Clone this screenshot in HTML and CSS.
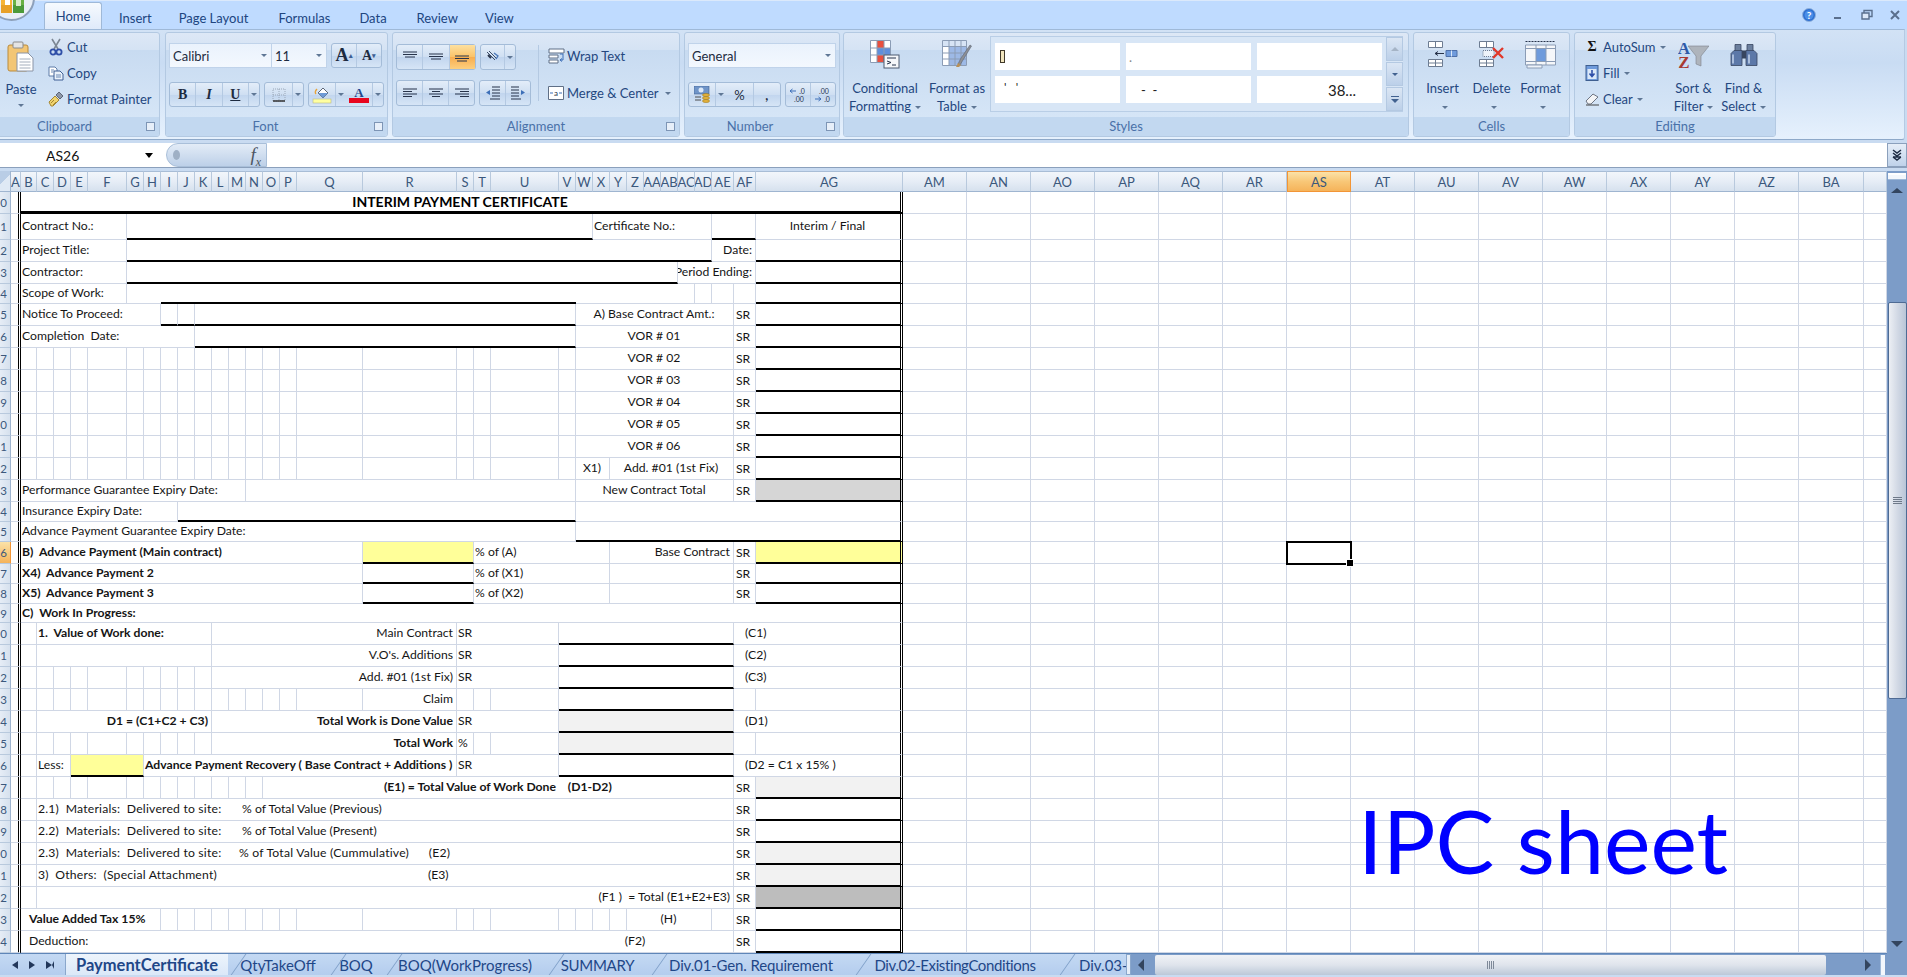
FILE: index.html
```html
<!DOCTYPE html>
<html lang="en">
<head>
    <meta charset="UTF-8">
    <title>IPC sheet - Microsoft Excel</title>
    <link rel="stylesheet" href="styles.css">
</head>
<body>
<div class="app">
    <div class="office-btn">
        <svg width="26" height="16" viewBox="0 0 26 16"><rect x="1" y="0" width="11" height="8" fill="#f5b437"/><rect x="13" y="0" width="11" height="8" fill="#69b043"/><rect x="1" y="8" width="11" height="8" fill="#e8a026"/><rect x="13" y="8" width="11" height="8" fill="#4c9a3a"/><rect x="5" y="3" width="5" height="5" fill="#fff"/><rect x="16" y="3" width="5" height="6" fill="#d9eccb"/></svg>
    </div>
    <div class="tabbar">
        <span class="rtab active">Home</span>
        <span class="rtab t-insert">Insert</span>
        <span class="rtab t-page">Page Layout</span>
        <span class="rtab t-form">Formulas</span>
        <span class="rtab t-data">Data</span>
        <span class="rtab t-rev">Review</span>
        <span class="rtab t-view">View</span>
        <div class="winctl">
            <svg width="14" height="14" viewBox="0 0 14 14"><circle cx="7" cy="7" r="6.5" fill="#2e6fd0" stroke="#8fb0dc"/><circle cx="7" cy="7" r="4.5" fill="#4a8ee8"/><text x="7" y="10.5" font-size="10" font-weight="700" text-anchor="middle" fill="#fff">?</text></svg>
            <svg width="12" height="12" viewBox="0 0 12 12"><path d="M2 9h7" stroke="#5a6f8d" stroke-width="2"/></svg>
            <svg width="12" height="12" viewBox="0 0 12 12"><path d="M3 1.5h8v6H3z" fill="none" stroke="#5a6f8d" stroke-width="1.4"/><path d="M1 4h7v6H1z" fill="#dbe8f8" stroke="#5a6f8d" stroke-width="1.4"/></svg>
            <svg width="12" height="12" viewBox="0 0 12 12"><path d="M2 2l8 8M10 2l-8 8" stroke="#5a6f8d" stroke-width="2"/></svg>
        </div>
    </div>

    <div class="ribbon">
        <div class="group g-clip">
            <div class="group-body">
                <div class="paste">
                    <svg width="28" height="31" viewBox="0 0 28 31"><rect x="1" y="4" width="20" height="26" rx="2" fill="#f3c675" stroke="#b98a3c"/><rect x="6" y="1" width="10" height="6" rx="1" fill="#e4e4e4" stroke="#8b8b8b"/><path d="M10 12h11l5 5v13H10z" fill="#fff" stroke="#8a94a6"/><path d="M12.500 18h11M12.500 21h11M12.500 24h11M12.500 27h11" stroke="#a4aebc"/></svg>
                    <span class="paste-label">Paste</span>
                    <i class="dd"></i>
                </div>
                <div class="clip-list">
                    <div class="clip-item">
                        <svg width="14" height="18" viewBox="0 0 14 18"><path d="M3 1l6 10M11 1L5 11" stroke="#7d8794" stroke-width="1.6"/><circle cx="4" cy="14" r="2.600" fill="none" stroke="#2f4fa8" stroke-width="1.800"/><circle cx="10" cy="14" r="2.600" fill="none" stroke="#2f4fa8" stroke-width="1.800"/></svg>
                        <span>Cut</span>
                    </div>
                    <div class="clip-item">
                        <svg width="16" height="15" viewBox="0 0 16 15"><path d="M1 1h6l2 2v7H1z" fill="#fff" stroke="#5f7da8"/><path d="M6 5h6l3 3v6H6z" fill="#eaf2fb" stroke="#3e5f94"/><path d="M8 9h5M8 11h5M3 4h3M3 6h2" stroke="#6d8ab5"/></svg>
                        <span>Copy</span>
                    </div>
                    <div class="clip-item">
                        <svg width="16" height="16" viewBox="0 0 16 16"><path d="M1 11l6-6 4 4-6 6H3z" fill="#f0d470" stroke="#a58732"/><path d="M8 4l3-3 4 4-3 3z" fill="#8d97a8" stroke="#5d6677"/><path d="M3 12l3-3M5 14l3-3" stroke="#a58732"/></svg>
                        <span>Format Painter</span>
                    </div>
                </div>
            </div>
            <div class="group-cap cap-clip">Clipboard<i class="launcher"></i></div>
        </div>

        <div class="group g-font">
            <div class="group-body stack">
                <div class="tool-row">
                    <div class="combo font-name"><span>Calibri</span><i class="dd"></i></div>
                    <div class="combo font-size"><span>11</span><i class="dd"></i></div>
                    <div class="strip grow-shrink">
                        <span class="serif big-a">A<sup>&#9652;</sup></span>
                        <span class="serif small-a">A<sup>&#9662;</sup></span>
                    </div>
                </div>
                <div class="tool-row">
                    <div class="strip biu">
                        <span class="serif fb">B</span>
                        <span class="serif fi">I</span>
                        <span class="serif fu">U</span>
                        <span class="drop"><i class="dd"></i></span>
                    </div>
                    <div class="strip borders">
                        <span><svg width="14" height="14" viewBox="0 0 14 14"><path d="M1 1h12v12H1z" fill="none" stroke="#9aa7b8" stroke-dasharray="1 1"/><path d="M1 7h12M7 1v12" stroke="#9aa7b8" stroke-dasharray="1 1"/><path d="M1 13h12" stroke="#333" stroke-width="1.500"/></svg></span>
                        <span class="drop"><i class="dd"></i></span>
                    </div>
                    <div class="strip colors">
                        <span><svg width="20" height="18" viewBox="0 0 20 18"><path d="M6 7l5-5 5 5-5 5z" fill="#fff" stroke="#5d6677"/><path d="M6 7h10l-5 5z" fill="#6f9bd6"/><path d="M5 3c-2 2-2 4-1 5" fill="none" stroke="#e8a43a" stroke-width="1.500"/><rect x="1" y="13" width="18" height="4" fill="#ffffa0" stroke="#b9b98a" stroke-width=".6"/></svg></span>
                        <span class="drop"><i class="dd"></i></span>
                        <span><svg width="20" height="18" viewBox="0 0 20 18"><text x="10" y="11" font-size="13" font-weight="700" text-anchor="middle" fill="#23468b" font-family="Liberation Serif, serif">A</text><rect x="0" y="12" width="20" height="5" fill="#e8061e"/></svg></span>
                        <span class="drop"><i class="dd"></i></span>
                    </div>
                </div>
            </div>
            <div class="group-cap cap-font">Font<i class="launcher"></i></div>
        </div>

        <div class="group g-align">
            <div class="group-body align-body">
                <div class="stack align-tools">
                    <div class="tool-row">
                        <div class="strip three">
                            <span><svg width="14" height="12" viewBox="0 0 14 12"><path d="M0 1h14M0 3.500h14M2 6h10" stroke="#27334a"/></svg></span>
                            <span><svg width="14" height="12" viewBox="0 0 14 12"><path d="M0 3h14M0 5.500h14M2 8h10" stroke="#27334a"/></svg></span>
                            <span class="on"><svg width="14" height="12" viewBox="0 0 14 12"><path d="M0 5h14M0 7.500h14M2 10h10" stroke="#27334a"/></svg></span>
                        </div>
                        <div class="strip orient">
                            <span><svg width="16" height="14" viewBox="0 0 16 14"><path d="M2 2l8 8M4 1l8 8" stroke="#3c4c66"/><path d="M9 3l4 3-2 3" fill="none" stroke="#4c78b8" stroke-width="1.300"/><path d="M3 5l3 3" stroke="#27334a" stroke-width="2"/></svg></span>
                            <span class="drop"><i class="dd"></i></span>
                        </div>
                    </div>
                    <div class="tool-row">
                        <div class="strip three">
                            <span><svg width="14" height="11" viewBox="0 0 14 11"><path d="M0 1h14M0 3.500h9M0 6h14M0 8.500h9" stroke="#27334a"/></svg></span>
                            <span><svg width="14" height="11" viewBox="0 0 14 11"><path d="M0 1h14M3 3.500h8M0 6h14M3 8.500h8" stroke="#27334a"/></svg></span>
                            <span><svg width="14" height="11" viewBox="0 0 14 11"><path d="M0 1h14M5 3.500h9M0 6h14M5 8.500h9" stroke="#27334a"/></svg></span>
                        </div>
                        <div class="strip indent">
                            <span><svg width="16" height="14" viewBox="0 0 16 14"><path d="M7 1h8M7 4h8M7 7h8M7 10h8M5 13h10" stroke="#27334a"/><path d="M5 4L1 6.500 5 9z" fill="#3d6fb8"/></svg></span>
                            <span><svg width="16" height="14" viewBox="0 0 16 14"><path d="M1 1h8M1 4h8M1 7h8M1 10h8M1 13h10" stroke="#27334a"/><path d="M11 4l4 2.500L11 9z" fill="#3d6fb8"/></svg></span>
                        </div>
                    </div>
                </div>
                <div class="align-sep"></div>
                <div class="wrap-merge">
                    <div class="clip-item">
                        <svg width="16" height="16" viewBox="0 0 16 16"><path d="M1 1h15v4H1zM1 7h9v3H1zM1 12h9v3H1z" fill="#fff" stroke="#5f6f86"/><path d="M12 6h3v6h-3M12 12l2-1.500M12 12l2 1.500" fill="none" stroke="#3d6fb8"/></svg>
                        <span>Wrap Text</span>
                    </div>
                    <div class="clip-item">
                        <svg width="16" height="16" viewBox="0 0 16 16"><path d="M.5 1.500h15v13H.5z" fill="#fff" stroke="#5f6f86"/><text x="8" y="11" font-size="8" text-anchor="middle" fill="#27334a">a</text><path d="M2 8h3M14 8h-3" stroke="#3d6fb8"/></svg>
                        <span>Merge &amp; Center</span><i class="dd"></i>
                    </div>
                </div>
            </div>
            <div class="group-cap">Alignment<i class="launcher"></i></div>
        </div>

        <div class="group g-number">
            <div class="group-body stack">
                <div class="combo num-format"><span>General</span><i class="dd"></i></div>
                <div class="tool-row">
                    <div class="strip currency">
                        <span><svg width="17" height="17" viewBox="0 0 17 17"><rect x="0" y="0" width="15" height="8" fill="#6f94c8" stroke="#3f5f90" stroke-width=".6"/><circle cx="7" cy="4" r="2.500" fill="#dbe8f8"/><ellipse cx="12" cy="9" rx="3.500" ry="1.500" fill="#e3b23c" stroke="#a07a20" stroke-width=".6"/><ellipse cx="12" cy="12" rx="3.500" ry="1.500" fill="#e3b23c" stroke="#a07a20" stroke-width=".6"/><ellipse cx="12" cy="15" rx="3.500" ry="1.500" fill="#e3b23c" stroke="#a07a20" stroke-width=".6"/><path d="M1 11h6M1 14h6" stroke="#4d4d4d"/></svg></span>
                        <span class="drop"><i class="dd"></i></span>
                        <span class="glyph">%</span>
                        <span class="glyph comma">,</span>
                    </div>
                    <div class="strip decimals">
                        <span><svg width="18" height="16" viewBox="0 0 18 16"><path d="M7 4H1M1 4l2.500-2M1 4l2.500 2" fill="none" stroke="#3d6fb8"/><text x="13" y="7" font-size="7" text-anchor="middle" fill="#27334a">.0</text><text x="10" y="15" font-size="7" text-anchor="middle" fill="#27334a">.00</text></svg></span>
                        <span><svg width="18" height="16" viewBox="0 0 18 16"><text x="10" y="7" font-size="7" text-anchor="middle" fill="#27334a">.00</text><path d="M1 12h6M7 12l-2.500-2M7 12l-2.500 2" fill="none" stroke="#3d6fb8"/><text x="13" y="15" font-size="7" text-anchor="middle" fill="#27334a">.0</text></svg></span>
                    </div>
                </div>
            </div>
            <div class="group-cap cap-number">Number<i class="launcher"></i></div>
        </div>

        <div class="group g-styles">
            <div class="group-body">
                <div class="big big-cf">
                    <svg width="30" height="29" viewBox="0 0 30 29"><path d="M.5 .5h20v22H.5z" fill="#fff" stroke="#8b9cb5"/><rect x="7" y="1" width="7" height="7" fill="#e8503f"/><rect x="7" y="8" width="13" height="7" fill="#5f8fdc"/><rect x="7" y="15" width="9" height="7" fill="#e8503f"/><rect x="1" y="15" width="6" height="7" fill="#fff"/><path d="M7 .5v22M14 .5v22M.5 8h20M.5 15h20" stroke="#8b9cb5"/><rect x="14" y="15" width="15" height="13" fill="#f5f7fa" stroke="#4d5a70"/><path d="M17 18h9M17 21l4 1.500-4 1.500M22 25h4" fill="none" stroke="#27334a"/></svg>
                    <span>Conditional</span>
                    <span>Formatting<i class="dd"></i></span>
                </div>
                <div class="big big-ft">
                    <svg width="30" height="29" viewBox="0 0 30 29"><path d="M.5 .5h24v25H.5z" fill="#fff" stroke="#8b9cb5"/><rect x="1" y="1" width="23" height="5" fill="#d7e4f5"/><rect x="7" y="7" width="17" height="18" fill="#9db9e6"/><path d="M7 .5v25M13 .5v25M19 .5v25M.5 6.500h24M.5 13h24M.5 19h24" stroke="#8b9cb5"/><path d="M16 24l3-6 9-13 1.500 1L21 20l-3 5z" fill="#8d8f94" stroke="#5d6677" stroke-width=".6"/><path d="M14 27l2-4 3 2-2 2z" fill="#b89058"/></svg>
                    <span>Format as</span>
                    <span>Table<i class="dd"></i></span>
                </div>
                <div class="gallery">
                    <div class="gallery-cells">
                        <div class="style-cell caret-cell"><i class="text-caret"></i></div>
                        <div class="style-cell dot-cell">.</div>
                        <div class="style-cell"></div>
                        <div class="style-cell quote-cell">' &nbsp;&nbsp;'</div>
                        <div class="style-cell dash-cell">- &nbsp;-</div>
                        <div class="style-cell num-cell">38...</div>
                    </div>
                    <div class="gallery-scroll">
                        <span><i class="up"></i></span>
                        <span><i class="dd"></i></span>
                        <span><i class="more"></i></span>
                    </div>
                </div>
            </div>
            <div class="group-cap">Styles</div>
        </div>

        <div class="group g-cells">
            <div class="group-body">
                <div class="big big-cell">
                    <svg width="30" height="27" viewBox="0 0 30 27"><path d="M.5 .5h14v6H.5zM7.500 .5v6M.5 18.500h14v7H.5zM.5 22h14M7.500 18.500v7" fill="#fff" stroke="#6d7c92"/><path d="M18 9.500h11v6H18z" fill="#6f9bdc" stroke="#4d6fa8"/><path d="M23.500 9.500v6" stroke="#dbe8f8"/><path d="M16 12.500H7M7 12.500l3-2M7 12.500l3 2" fill="none" stroke="#27334a"/></svg>
                    <span>Insert</span>
                    <span><i class="dd"></i></span>
                </div>
                <div class="big big-cell">
                    <svg width="26" height="27" viewBox="0 0 26 27"><path d="M.5 .5h14v6H.5zM7.500 .5v6M.5 18.500h14v7H.5zM.5 22h14M7.500 18.500v7" fill="#fff" stroke="#6d7c92"/><path d="M4 9.500h11v6H4z" fill="#eef3fa" stroke="#6d7c92" stroke-dasharray="1 1"/><path d="M14 7l10 10M24 7L14 17" stroke="#e0382a" stroke-width="2.400"/></svg>
                    <span>Delete</span>
                    <span><i class="dd"></i></span>
                </div>
                <div class="big big-cell">
                    <svg width="31" height="28" viewBox="0 0 31 28"><path d="M.5 1h30" stroke="#27334a" stroke-dasharray="2 1"/><path d="M.5 4.500h30v20H.5z" fill="#f5f7fa" stroke="#8b9cb5"/><rect x="11" y="8" width="10" height="13" fill="#6f9bdc"/><path d="M11 4.500v20M21 4.500v20M.5 8h30M.5 21h30" stroke="#8b9cb5"/><path d="M2 24.500h15v3H2z" fill="#eef3fa" stroke="#8b9cb5"/></svg>
                    <span>Format</span>
                    <span><i class="dd"></i></span>
                </div>
            </div>
            <div class="group-cap">Cells</div>
        </div>

        <div class="group g-edit">
            <div class="group-body">
                <div class="clip-list edit-list">
                    <div class="clip-item">
                        <span class="sigma serif">&Sigma;</span>
                        <span>AutoSum</span><i class="dd"></i>
                    </div>
                    <div class="clip-item">
                        <svg width="13" height="16" viewBox="0 0 13 16"><rect x=".5" y=".5" width="12" height="15" fill="#6f9bdc" stroke="#3f5f90"/><rect x="2" y="4" width="9" height="10" fill="#dbe8f8"/><path d="M6.500 5v6M4 8.500l2.500 3 2.500-3" fill="none" stroke="#2f4fa8" stroke-width="1.600"/></svg>
                        <span>Fill</span><i class="dd"></i>
                    </div>
                    <div class="clip-item">
                        <svg width="16" height="14" viewBox="0 0 16 14"><path d="M2 9l7-7 5 3-7 7H4z" fill="#f3f4f6" stroke="#6d7482"/><path d="M2 13h13" stroke="#444"/></svg>
                        <span>Clear</span><i class="dd"></i>
                    </div>
                </div>
                <div class="big big-sort">
                    <svg width="31" height="29" viewBox="0 0 31 29"><path d="M10 6h21l-8 10v10l-5-2v-8z" fill="#aeb4bc" stroke="#7c828c" stroke-width=".6"/><text x="6" y="14" font-size="17" font-weight="700" text-anchor="middle" fill="#2f5aa8" font-family="Liberation Serif, serif">A</text><text x="6" y="28" font-size="17" font-weight="700" text-anchor="middle" fill="#a83a32" font-family="Liberation Serif, serif">Z</text></svg>
                    <span>Sort &amp;</span>
                    <span>Filter<i class="dd"></i></span>
                </div>
                <div class="big big-find">
                    <svg width="28" height="26" viewBox="0 0 28 26"><path d="M5 3h6v8H5zM17 3h6v8h-6z" fill="#6b7f9e" stroke="#37455f" stroke-width=".8"/><path d="M1 12l3-3h8v15H1zM27 12l-3-3h-8v15h11z" fill="#5c78a8" stroke="#37455f" stroke-width=".8"/><rect x="12" y="9" width="4" height="8" fill="#37455f"/><path d="M3 13v9M19 13v9" stroke="#c6d6ee" stroke-width="1.500"/></svg>
                    <span>Find &amp;</span>
                    <span>Select<i class="dd"></i></span>
                </div>
            </div>
            <div class="group-cap">Editing</div>
        </div>
    </div>

    <div class="formula-bar">
        <div class="name-box"><span>AS26</span><i class="name-arrow"></i></div>
        <div class="fx-pill"><i class="fx-dot"></i><span class="fx serif">f<sub>x</sub></span></div>
        <div class="formula-input"></div>
        <div class="formula-expand">
            <svg width="12" height="12" viewBox="0 0 12 12"><path d="M2 1l4 3 4-3M2 4l4 3 4-3M2 8h8M2 8l4 3 4-3" fill="none" stroke="#1e2c44" stroke-width="1.500"/></svg>
        </div>
    </div>

    <div class="main">
        <div class="sheet-area">
            <div class="sheet-wrap">
                <div class="sheet" id="sheet"></div>
                <div class="ipc-note">IPC sheet</div>
            </div>
            <div class="bottom-bar">
                <div class="tab-nav">
                    <i class="tri-left"></i>
                    <i class="tri-right"></i>
                    <i class="tri-right end"></i>
                </div>
                <div class="sheet-tab tb1 current">PaymentCertificate</div>
                <div class="sheet-tab tb2">QtyTakeOff</div>
                <div class="sheet-tab tb3">BOQ</div>
                <div class="sheet-tab tb4">BOQ(WorkProgress)</div>
                <div class="sheet-tab tb5">SUMMARY</div>
                <div class="sheet-tab tb6">Div.01-Gen. Requirement</div>
                <div class="sheet-tab tb7">Div.02-ExistingConditions</div>
                <div class="sheet-tab tb8">Div.03-</div>
                <i class="tab-split"></i>
                <div class="hscroll">
                    <i class="tri-left dark"></i>
                    <div class="hthumb"><span class="grip-v"></span></div>
                    <i class="tri-right dark"></i>
                    <i class="hsplit"></i>
                </div>
            </div>
        </div>
        <div class="vscroll">
            <i class="vsplit"></i>
            <i class="tri-up"></i>
            <div class="vthumb"><span class="grip-h"></span></div>
            <i class="tri-down"></i>
        </div>
    </div>
</div>
<script src="script.js"></script>
</body>
</html>
```

FILE: styles.css
```css
* {
    box-sizing: border-box;
}
body {
    margin: 0;
    overflow: hidden;
    font-family: Lato, "Open Sans", sans-serif;
    background-color: #c5d9f1;
}
i {
    display: inline-block;
    font-style: normal;
}
.serif {
    font-family: "Liberation Serif", serif;
}
.app {
    position: relative;
    width: 1907px;
    height: 977px;
    display: flex;
    flex-direction: column;
    overflow: hidden;
    background: #c9dbf1;
}

/* title / tab strip */
.office-btn {
    position: absolute;
    left: -12px;
    top: -26px;
    width: 47px;
    height: 47px;
    border-radius: 50%;
    background: #e9eff7;
    border: 2px solid #8da0ba;
    display: flex;
    align-items: flex-end;
    justify-content: center;
    padding: 0 0 6px 2px;
    z-index: 2;
}
.tabbar {
    height: 29px;
    background: #bfdbff;
    display: flex;
    align-items: flex-end;
    padding-left: 44px;
    border-top: 1px solid #dbe9fb;
    font-size: 13px;
    color: #20457f;
}
.rtab {
    height: 23px;
    display: flex;
    align-items: center;
}
.rtab.active {
    width: 58px;
    height: 27px;
    justify-content: center;
    background: linear-gradient(#f6fafe, #dfeafa);
    border: 1px solid #9fb9d8;
    border-bottom: none;
    border-radius: 3px 3px 0 0;
}
.t-insert { margin-left: 17px; }
.t-page { margin-left: 27px; }
.t-form { margin-left: 30px; }
.t-data { margin-left: 29px; }
.t-rev { margin-left: 30px; }
.t-view { margin-left: 27px; }
.winctl {
    margin-left: auto;
    align-self: flex-start;
    width: 99px;
    margin-right: 6px;
    margin-top: 7px;
    display: flex;
    justify-content: space-between;
    align-items: center;
}

/* ribbon */
.ribbon {
    height: 111px;
    display: flex;
    padding-top: 2px;
    width: 1905px;
    background: linear-gradient(#d2e2f5, #c9dcf3 30%, #e6f1fd);
    border-top: 1px solid #9fb9d8;
    border-bottom: 1px solid #8ea9c9;
    border-right: 1px solid #b5cae3;
    border-radius: 0 0 3px 0;
    font-size: 13px;
    color: #24477f;
}
.group {
    height: 105px;
    display: flex;
    flex-direction: column;
    border: 1px solid #b3c9e2;
    border-radius: 3px;
    background: linear-gradient(#dde8f6, #d5e3f4 16%, #c8dbf1 17%, #d9e8f8);
    overflow: hidden;
}
.g-clip { width: 163px; margin-left: -3px; }
.g-font { width: 223px; margin-left: 5px; }
.g-align { width: 288px; margin-left: 4px; }
.g-number { width: 156px; margin-left: 4px; }
.g-styles { width: 566px; margin-left: 3px; }
.g-cells { width: 157px; margin-left: 4px; }
.g-edit { width: 202px; margin-left: 4px; }
.group-body {
    height: 84px;
    display: flex;
}
.group-cap {
    position: relative;
    height: 19px;
    line-height: 19px;
    text-align: center;
    background: #c2d8f0;
    color: #4a71a8;
}
.cap-clip { padding-right: 28px; }
.cap-font { padding-right: 22px; }
.cap-number { padding-right: 24px; }
.launcher {
    position: absolute;
    right: 4px;
    top: 5px;
    width: 9px;
    height: 9px;
    border: 1px solid #7d95b5;
    background: #e7eff9;
}
.dd {
    width: 0;
    height: 0;
    margin-left: 4px;
    border-left: 3px solid transparent;
    border-right: 3px solid transparent;
    border-top: 3px solid #5f7795;
    vertical-align: middle;
}

/* clipboard */
.paste {
    width: 42px;
    padding-top: 8px;
    display: flex;
    flex-direction: column;
    align-items: center;
    flex: none;
    margin-left: 2px;
}
.paste-label {
    margin-top: 8px;
    line-height: 18px;
}
.paste .dd {
    margin: 6px 0 0;
}
.clip-list {
    display: flex;
    flex-direction: column;
    margin-left: 5px;
    padding-top: 1px;
}
.clip-item {
    height: 26px;
    display: flex;
    align-items: center;
    white-space: nowrap;
}
.clip-item svg {
    width: 18px;
    margin-right: 2px;
    flex: none;
}
.edit-list .clip-item svg,
.edit-list .sigma {
    width: 18px;
    margin-right: 2px;
    text-align: center;
}
.sigma {
    font-weight: 700;
    font-size: 14px;
    color: #111;
}

/* shared small tool rows */
.stack {
    display: flex;
    flex-direction: column;
    gap: 14px;
    padding: 10px 3px 0;
}
.tool-row {
    display: flex;
    gap: 4px;
}
.combo {
    height: 25px;
    display: flex;
    align-items: center;
    padding: 0 4px 0 3px;
    background: linear-gradient(#eaf2fc, #f3f8fe);
    border: 1px solid #c0d3ea;
    color: #1d2b40;
    font-size: 13px;
}
.combo .dd {
    margin-left: auto;
}
.font-name { width: 103px; }
.font-size { width: 55px; border-left: none; margin-left: -4px; }
.num-format { width: 148px; }
.strip {
    height: 25px;
    display: flex;
    align-items: center;
    border: 1px solid #a4bcd8;
    border-radius: 3px;
    background: linear-gradient(#e3edf9, #cfdff2 50%, #c1d5ee 51%, #d6e5f6);
    color: #1d2b40;
}
.strip > span {
    height: 100%;
    flex: 1;
    display: flex;
    align-items: center;
    justify-content: center;
    border-right: 1px solid #b4c9e2;
}
.strip > span:last-child {
    border-right: none;
}
.strip .drop {
    border-right: none;
    flex: none;
    width: 10px;
}
.strip .drop .dd {
    margin: 0;
}
.strip sup {
    font-size: 7px;
    line-height: 0;
    vertical-align: 8px;
    color: #3d5f94;
}
.grow-shrink { width: 51px; }
.big-a { font-size: 18px; font-weight: 700; }
.small-a { font-size: 14px; font-weight: 700; }
.biu { width: 91px; }
.fb { font-weight: 700; font-size: 14px; }
.fi { font-style: italic; font-weight: 700; font-size: 14px; }
.fu { text-decoration: underline; font-weight: 700; font-size: 14px; }
.borders { width: 40px; }
.colors { width: 76px; }

/* alignment */
.align-body {
    align-items: flex-start;
}
.align-tools {
    gap: 10px;
    width: 141px;
    padding-top: 11px;
    flex: none;
}
.three { width: 80px; height: 26px; }
.three .on {
    background: linear-gradient(#fde0a0, #fbc268 50%, #f8ad4f 51%, #fccf7f);
}
.orient { width: 36px; height: 26px; }
.indent { width: 52px; height: 26px; }
.align-sep {
    width: 1px;
    height: 56px;
    margin: 12px 0 0 4px;
    background: #b4c9e2;
}
.wrap-merge {
    display: flex;
    flex-direction: column;
    gap: 11px;
    margin-left: 8px;
    padding-top: 10px;
}
.wrap-merge .clip-item .dd {
    margin-left: 6px;
}

/* number */
.currency { width: 93px; }
.currency .glyph { font-size: 13px; }
.comma { font-weight: 700; }
.decimals { width: 51px; }

/* styles */
.big {
    display: flex;
    flex-direction: column;
    align-items: center;
    padding-top: 7px;
    white-space: nowrap;
    line-height: 18px;
    flex: none;
}
.big svg {
    height: 29px;
    margin-bottom: 10px;
}
.big .dd {
    margin-left: 4px;
}
.big-cf { width: 78px; margin-left: 2px; }
.big-ft { width: 66px; margin-left: 0; }
.gallery {
    display: flex;
    width: 413px;
    height: 76px;
    margin: 3px 0 0 0;
    padding: 0 0 0 4px;
    background: #d8e6f6;
    border: 1px solid #b9cee6;
    border-right: none;
}
.gallery-cells {
    display: grid;
    grid-template-columns: 125px 125px 125px;
    grid-template-rows: 27px 27px;
    gap: 6px;
    padding-top: 6px;
    color: #222;
}
.style-cell {
    background: #fff;
    display: flex;
    align-items: center;
    position: relative;
    font-size: 13px;
}
.caret-cell { padding-left: 5px; }
.text-caret {
    width: 5px;
    height: 13px;
    border: 1px solid #40392a;
    background: #f1e5bd;
}
.dot-cell { padding-left: 3px; color: #888; }
.quote-cell { padding: 3px 0 0 9px; align-items: flex-start; font-size: 12px; }
.dash-cell { padding-left: 15px; }
.num-cell { justify-content: flex-end; padding-right: 26px; font-size: 15px; }
.gallery-scroll {
    width: 17px;
    margin-left: 4px;
    display: flex;
    flex-direction: column;
    gap: 1px;
}
.gallery-scroll span {
    flex: 1;
    display: flex;
    align-items: center;
    justify-content: center;
    background: linear-gradient(#dbe6f4, #bcd0e9);
    border: 1px solid #b4c9e2;
}
.gallery-scroll .dd {
    margin: 0;
    border-top-color: #41618f;
}
.up {
    width: 0;
    height: 0;
    border-left: 4px solid transparent;
    border-right: 4px solid transparent;
    border-bottom: 4px solid #a5b4c6;
}
.more {
    width: 8px;
    height: 7px;
    border-top: 1px solid #41618f;
    position: relative;
}
.more::after {
    content: "";
    position: absolute;
    left: 0;
    top: 2px;
    border-left: 4px solid transparent;
    border-right: 4px solid transparent;
    border-top: 4px solid #41618f;
}

/* cells and editing */
.big-cell {
    width: 49px;
}
.big-cell:first-child {
    margin-left: 4px;
}
.edit-list {
    width: 86px;
    margin-left: 8px;
    flex: none;
}
.big-sort { width: 49px; }
.big-find { width: 49px; margin-left: 1px; }

/* formula bar */
.formula-bar {
    height: 25px;
    margin-top: 3px;
    display: flex;
    background: #fff;
    border-bottom: 1px solid #8ba0bc;
}
.name-box {
    width: 166px;
    display: flex;
    align-items: center;
    padding-left: 46px;
    font-size: 14px;
    color: #111;
}
.name-arrow {
    margin-left: 66px;
    border-left: 4px solid transparent;
    border-right: 4px solid transparent;
    border-top: 5px solid #000;
}
.fx-pill {
    width: 101px;
    display: flex;
    align-items: center;
    justify-content: space-between;
    padding: 0 5px 0 6px;
    border-radius: 12px 0 0 12px;
    background: linear-gradient(#e3ecf7, #bdd0e8);
    border: 1px solid #a9bfd9;
}
.fx-dot {
    width: 7px;
    height: 10px;
    border-radius: 50%;
    background: #9fb0c5;
}
.fx {
    font-style: italic;
    font-size: 19px;
    color: #4c5562;
}
.fx sub {
    font-size: 12px;
    line-height: 0;
}
.formula-input {
    flex: 1;
}
.formula-expand {
    width: 20px;
    display: flex;
    align-items: center;
    justify-content: center;
    background: linear-gradient(#e6eef8, #bfd2ea);
    border: 1px solid #8ba0bc;
}

/* sheet */
.main {
    flex: 1;
    display: flex;
    margin-top: 3px;
    min-height: 0;
}
.sheet-area {
    width: 1887px;
    display: flex;
    flex-direction: column;
}
.sheet-wrap {
    position: relative;
    height: 782px;
}
.sheet {
    display: grid;
    background: #fff;
    color: #151515;
    font-size: 12.200px;
}
.corner {
    background: linear-gradient(135deg, #b9cde6 45%, #dfe9f5 46%);
    border-bottom: 1px solid #9fb5d0;
    border-right: 1px solid #9fb5d0;
}
.colhead {
    display: flex;
    align-items: center;
    justify-content: center;
    overflow: hidden;
    white-space: nowrap;
    font-size: 13px;
    color: #3b587c;
    background: linear-gradient(#f2f6fb, #e6edf6 50%, #d6e1ee);
    border-top: 1px solid #a8bdd6;
    border-right: 1px solid #b8c9dd;
    border-bottom: 1px solid #9fb5d0;
}
.rowhead {
    display: flex;
    align-items: center;
    justify-content: flex-end;
    overflow: hidden;
    padding-right: 3px;
    font-size: 11.500px;
    color: #3b587c;
    background: linear-gradient(90deg, #e6edf6, #d6e1ee);
    border-right: 1px solid #9fb5d0;
    border-bottom: 1px solid #b8c9dd;
}
.colhead.sel-head {
    background: linear-gradient(#fbe2a8, #f8c777 50%, #f5b35a);
    border: 1px solid #f29536;
}
.rowhead.sel-head {
    background: linear-gradient(#fbe2a8, #f5b35a);
    border-right: 1px solid #f29536;
}
.cell {
    display: flex;
    align-items: center;
    padding: 0 2px 2px 1px;
    overflow: hidden;
    white-space: pre;
    border-right: 1px solid #d0d7e5;
    border-bottom: 1px solid #d0d7e5;
}
.cell.edge {
    border-right: 3px double #000;
}
.cell.r { justify-content: flex-end; padding-right: 3px; }
.cell.c { justify-content: center; }
.cell.b { font-weight: 700; }
.cell.ls { letter-spacing: .2px; }
.cell.nr { border-right: none; }
.cell.tk { border-bottom: 2px solid #000; }
.cell.tk3 { border-bottom: 3px solid #000; }
.cell.yel { background: #ffff99; }
.cell.g1 { background: #f2f2f2; }
.cell.g2 { background: #d6d6d6; }
.cell.g3 { background: #bdbdbd; }
.cell.sr { padding: 0 0 0 2px; }
.cell.ind { padding-left: 11px; }
.cell.p8 { padding-left: 8px; }
.cell.p10 { padding-left: 10px; }
.cell.p13 { padding-left: 13px; }
.cell.p65 { padding-left: 65px; }
.cell.e1 { padding-left: 121px; }
.cell.title {
    justify-content: center;
    padding-bottom: 0;
    font-size: 14px;
    font-weight: 700;
    color: #000;
}
.cell.sel {
    position: relative;
    overflow: visible;
    margin: -1px;
    border: 2px solid #000;
    z-index: 1;
}
.cell.sel::after {
    content: "";
    position: absolute;
    right: -4px;
    bottom: -4px;
    width: 6px;
    height: 6px;
    background: #000;
    border: 1px solid #fff;
}
.ipc-note {
    position: absolute;
    left: 1358px;
    top: 614px;
    font-family: Lato, sans-serif;
    font-size: 88px;
    line-height: 110px;
    color: #0000ff;
    white-space: nowrap;
}

/* sheet tabs and scrollbars */
.bottom-bar {
    height: 22px;
    display: flex;
    align-items: stretch;
    background: linear-gradient(#c4d9f3, #b4cdee);
    border-top: 1px solid #5f86b8;
}
.tab-nav {
    width: 65px;
    display: flex;
    align-items: center;
    gap: 11px;
    padding-left: 12px;
}
.tri-left, .tri-right {
    width: 0;
    height: 0;
    border-top: 4px solid transparent;
    border-bottom: 4px solid transparent;
}
.tri-left { border-right: 6px solid #22375a; }
.tri-right { border-left: 6px solid #22375a; }
.tri-right.end { border-right: 2px solid #22375a; }
.sheet-tab {
    position: relative;
    display: flex;
    align-items: center;
    justify-content: center;
    font-size: 15px;
    color: #1f4788;
    white-space: nowrap;
    overflow: hidden;
}
.sheet-tab + .sheet-tab::before {
    content: "";
    position: absolute;
    left: 2px;
    top: 0;
    width: 1px;
    height: 22px;
    background: #7f9fc8;
    transform: skewX(-35deg);
    transform-origin: bottom;
}
.sheet-tab.current {
    font-size: 16.500px;
    font-weight: 700;
    background: linear-gradient(#edf4fc, #dbe8f8);
    border-left: 1px solid #8aa7cc;
}
.tb1 { width: 163px; }
.tb2 { width: 100px; }
.tb3 { width: 56px; }
.tb4 { width: 162px; }
.tb5 { width: 103px; letter-spacing: -.3px; }
.tb6 { width: 204px; letter-spacing: -.15px; }
.tb7 { width: 204px; letter-spacing: -.4px; }
.tb8 { width: 69px; justify-content: flex-start; padding-left: 22px; }
.tab-split {
    width: 5px;
    background: #e6eef8;
    border: 1px solid #8aa7cc;
}
.hscroll {
    flex: 1;
    display: flex;
    align-items: center;
    padding-left: 7px;
    background: #7c9cc8;
}
.tri-left.dark, .tri-right.dark {
    border-top-width: 6px;
    border-bottom-width: 6px;
    border-left-color: #33455f;
    border-right-color: #33455f;
}
.hthumb {
    width: 671px;
    height: 20px;
    margin-left: 11px;
    display: flex;
    align-items: center;
    justify-content: center;
    background: linear-gradient(#f0f2f6, #dfe4ec 50%, #bcc8d8);
    border-radius: 2px;
}
.grip-v {
    width: 7px;
    height: 8px;
    background: repeating-linear-gradient(90deg, #7f8a99 0 1px, transparent 1px 2px);
}
.hscroll .tri-right {
    margin-left: 39px;
}
.hsplit {
    width: 5px;
    height: 20px;
    margin-left: 9px;
    background: #f3f7fc;
    border-left: 1px solid #9fb9d8;
}
.vscroll {
    width: 20px;
    height: 804px;
    position: relative;
    display: flex;
    flex-direction: column;
    align-items: center;
    background: #7c9cc8;
}
.vsplit {
    width: 18px;
    height: 7px;
    margin-top: 2px;
    background: #f3f7fc;
    border-top: 2px solid #fff;
    border-bottom: 1px solid #9fb9d8;
}
.tri-up, .tri-down {
    width: 0;
    height: 0;
    border-left: 6px solid transparent;
    border-right: 6px solid transparent;
}
.tri-up {
    margin-top: 8px;
    border-bottom: 5px solid #33455f;
}
.vthumb {
    width: 19px;
    height: 397px;
    margin-top: 109px;
    display: flex;
    align-items: center;
    justify-content: center;
    background: linear-gradient(90deg, #eceff4, #d2d9e5 50%, #b9c5d7);
    border: 1px solid #4f6b94;
    border-radius: 2px;
}
.grip-h {
    width: 9px;
    height: 7px;
    background: repeating-linear-gradient(#6e7989 0 1px, transparent 1px 2px);
}
.tri-down {
    margin-top: auto;
    margin-bottom: 28px;
    border-top: 6px solid #33455f;
}
```

FILE: script.js
```js
// column letters and widths, row heights, then every merged or filled range per row
const cols = ["A","B","C","D","E","F","G","H","I","J","K","L","M","N","O","P","Q","R","S","T","U","V","W","X","Y","Z",
    "AA","AB","AC","AD","AE","AF","AG","AM","AN","AO","AP","AQ","AR","AS","AT","AU","AV","AW","AX","AY","AZ","BA","BB"];
const widths = [10,16,17,17,17,39,17,17,17,17,17,17,17,17,17,17,66,94,17,17,68,17,17,17,17,17,17,17,17,17,22,22,147,
    64,64,64,64,64,64,64,64,64,64,64,64,64,64,65,23];
const heights = [22,26,22,22,20,22,22,22,22,22,22,22,22,22,20,20,22,20,20,19,22,22,22,22,22,22,22,22,22,22,22,22,22,22,22];

const sr = ["AF","AF","SR","sr"];
const ag = ["AG","AG","","tk"];
const vor = t => [["W","AE",t,"c"], sr, ag];

const rows = {
    10: [["B","AG","INTERIM PAYMENT CERTIFICATE","title tk3"]],
    11: [["B","F","Contract No.:"], ["G","W","","tk"], ["X","AD","Certificate No.:"], ["AE","AF","","tk"], ["AG","AG","Interim / Final","c"]],
    12: [["B","F","Project Title:"], ["G","AD","","tk"], ["AE","AF","Date:","r"], ag],
    13: [["B","F","Contractor:"], ["G","AB","","tk"], ["AC","AF","Period Ending:","r"], ag],
    14: [["B","F","Scope of Work:"], ["G","H","","nr"], ["I","V","","nr tk"], ["W","AC"], ag],
    15: [["B","H","Notice To Proceed:"], ["I","I","","tk"], ["J","J","","tk"], ["K","V","","tk"], ...vor("A) Base Contract Amt.:")],
    16: [["B","J","Completion  Date:"], ["K","V","","tk"], ...vor("VOR # 01")],
    17: vor("VOR # 02"),
    18: vor("VOR # 03"),
    19: vor("VOR # 04"),
    20: vor("VOR # 05"),
    21: vor("VOR # 06"),
    22: [["W","X","X1)","c"], ["Y","AE","Add. #01 (1st Fix)","c"], sr, ag],
    23: [["B","M","Performance Guarantee Expiry Date:"], ["N","V"], ["W","AE","New Contract Total","c"], sr, ["AG","AG","","tk g2"]],
    24: [["B","I","Insurance Expiry Date:"], ["J","V","","tk"], ["W","AG"]],
    25: [["B","V","Advance Payment Guarantee Expiry Date:"], ["W","AG","","tk"]],
    26: [["B","Q","B)  Advance Payment (Main contract)","b"], ["R","S","","tk yel"], ["T","X","% of (A)"], ["Y","AE","Base Contract","r"], sr, ["AG","AG","","tk yel"]],
    27: [["B","Q","X4)  Advance Payment 2","b"], ["R","S","","tk"], ["T","X","% of (X1)"], ["Y","AE"], sr, ag],
    28: [["B","Q","X5)  Advance Payment 3","b"], ["R","S","","tk"], ["T","X","% of (X2)"], ["Y","AE"], sr, ag],
    29: [["B","AG","C)  Work In Progress:","b"]],
    30: [["C","K","1.  Value of Work done:","b"], ["L","R","Main Contract","r"], ["S","U","SR"], ["V","AE","","tk"], ["AF","AG","(C1)","ind"]],
    31: [["C","K"], ["L","R","V.O's. Additions","r"], ["S","U","SR"], ["V","AE","","tk"], ["AF","AG","(C2)","ind"]],
    32: [["L","R","Add. #01 (1st Fix)","r"], ["S","U","SR"], ["V","AE","","tk"], ["AF","AG","(C3)","ind"]],
    33: [["R","R","Claim","r"], ["V","AE","","tk"]],
    34: [["C","K","D1 = (C1+C2 + C3)","r b"], ["L","R","Total Work is Done Value","r b"], ["S","U","SR"], ["V","AE","","tk g1"], ["AF","AG","(D1)","ind"]],
    35: [["L","R","Total Work","r b"], ["S","S","%"], ["V","AE","","tk g1"]],
    36: [["C","D","Less:"], ["E","G","","tk yel"], ["H","R","Advance Payment Recovery ( Base Contract + Additions )","b"], ["S","U","SR"], ["V","AE","","tk"], ["AF","AG","(D2 = C1 x 15% )","ind"]],
    37: [["O","AE","(E1) = Total Value of Work Done    (D1-D2)","b e1"], sr, ["AG","AG","","tk g1"]],
    38: [["C","L","2.1)  Materials:  Delivered to site:","nr ls"], ["M","AE","% of Total Value (Previous)","p13"], sr, ag],
    39: [["C","L","2.2)  Materials:  Delivered to site:","nr ls"], ["M","AE","% of Total Value (Present)","p13"], sr, ag],
    40: [["C","L","2.3)  Materials:  Delivered to site:","nr ls"], ["M","AE","% of Total Value (Cummulative)      (E2)","p10 ls"], sr, ["AG","AG","","tk g1"]],
    41: [["C","Q","3)  Others:  (Special Attachment)","nr ls"], ["R","AE","(E3)","p65"], sr, ["AG","AG","","tk g1"]],
    42: [["C","AE","(F1 )  = Total (E1+E2+E3)","r"], sr, ["AG","AG","","tk g3"]],
    43: [["B","H","Value Added Tax 15%","b p8"], ["Z","AD","(H)","c"], sr, ag],
    44: [["B","X","Deduction:","nr p8"], ["Y","AA","(F2)","c nr"], ["AB","AE"], sr, ag]
};

const sheet = document.getElementById("sheet");
sheet.style.gridTemplateColumns = "11px " + widths.map(w => w + "px").join(" ");
sheet.style.gridTemplateRows = "21px " + heights.map(h => h + "px").join(" ");

function add(className, text, span) {
    const el = document.createElement("div");
    el.className = className;
    if (text) el.textContent = text;
    if (span > 1) el.style.gridColumn = "span " + span;
    sheet.appendChild(el);
    return el;
}

add("corner");
cols.forEach(name => {
    add("colhead" + (name === "AS" ? " sel-head" : ""), name === "BB" ? "" : name);
});

heights.forEach((h, i) => {
    const num = 10 + i;
    add("rowhead" + (num === 26 ? " sel-head" : ""), String(num).slice(-1));

    const ranges = rows[num] || [];
    let c = 0;
    while (c < cols.length) {
        const range = ranges.find(r => r[0] === cols[c]);
        const end = range ? cols.indexOf(range[1]) : c;
        let cls = "cell";
        if (range && range[3]) cls += " " + range[3];
        if (c === 0 || end === cols.indexOf("AG")) cls += " edge";
        if (num === 26 && cols[c] === "AS") cls += " sel";
        add(cls, range ? range[2] : "", end - c + 1);
        c = end + 1;
    }
});
```
